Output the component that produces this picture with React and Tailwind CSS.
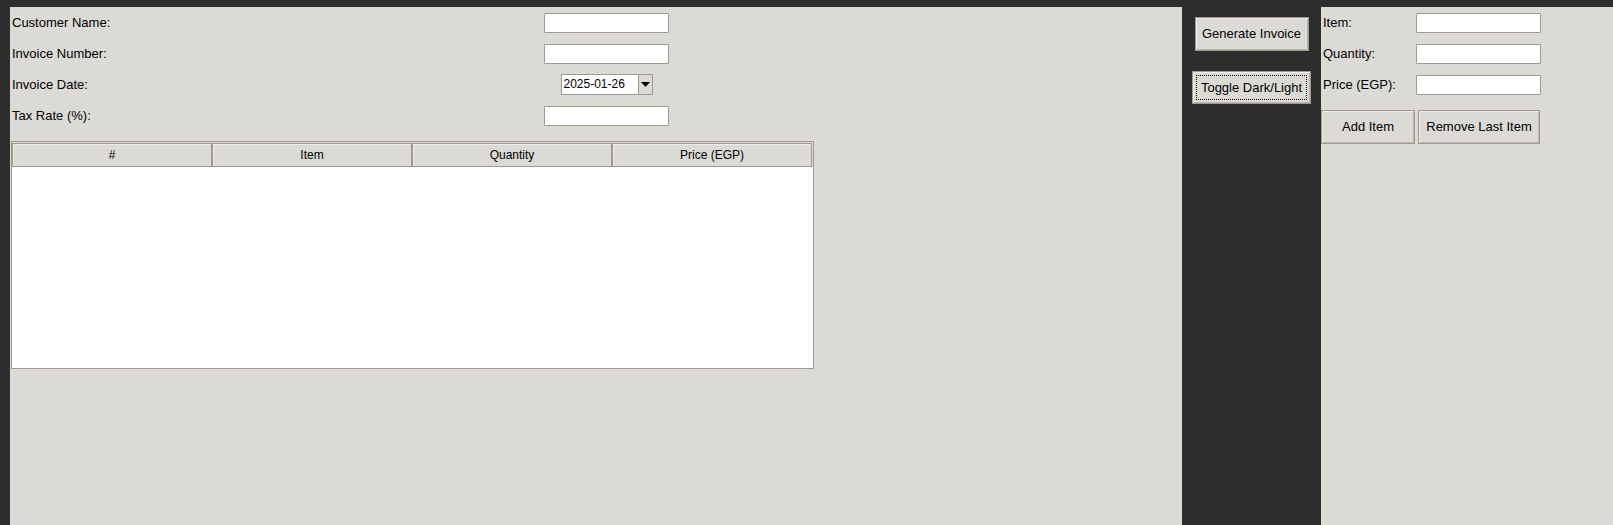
import { useState } from "react";

const font = { fontFamily: '"Liberation Sans", Arial, sans-serif' };

function Entry({ value = "", width = "w-[125px]" }) {
  return (
    <input
      defaultValue={value}
      className={`${width} h-[20px] bg-white border border-[#9e9a91] rounded-[1px] px-1 text-[13px] outline-none`}
    />
  );
}

function TkButton({ children, className = "", focused = false }) {
  return (
    <button
      className={`relative bg-[#dcdad5] border border-[#9e9a91] shadow-[inset_1px_1px_0_#eeebe7,inset_-1px_-1px_0_#bab5ab] text-[13px] text-black flex items-center justify-center ${className}`}
    >
      {focused && (
        <span className="absolute inset-[3px] border border-dotted border-black" />
      )}
      <span className="relative">{children}</span>
    </button>
  );
}

function Row({ label, children, labelWidth }) {
  return (
    <div className="flex items-center h-[31px]">
      <div className={`${labelWidth} pl-[2px] text-[13px] text-black`}>{label}</div>
      {children}
    </div>
  );
}

export default function App() {
  const [date] = useState("2025-01-26");
  const columns = ["#", "Item", "Quantity", "Price (EGP)"];

  return (
    <div className="h-[525px] w-[1613px] bg-[#2d2d2d] pt-[7px] pl-[10px] flex overflow-hidden" style={font}>
      {/* Left panel: invoice info + table */}
      <div className="w-[1172px] h-full bg-[#dcdad5]">
        <Row label="Customer Name:" labelWidth="w-[534px]">
          <Entry />
        </Row>
        <Row label="Invoice Number:" labelWidth="w-[534px]">
          <Entry />
        </Row>
        <Row label="Invoice Date:" labelWidth="w-[534px]">
          <div className="w-[125px] flex justify-center">
            <div className="flex h-[21px] w-[92px] border border-[#9e9a91] bg-white">
              <div className="flex-1 text-[12px] leading-[19px] pl-[2px] text-black">{date}</div>
              <div className="w-[14px] bg-[#dcdad5] border-l border-[#9e9a91] flex items-center justify-center">
                <svg width="9" height="5" viewBox="0 0 9 5">
                  <path d="M0 0 H9 L4.5 5 Z" fill="#000" />
                </svg>
              </div>
            </div>
          </div>
        </Row>
        <Row label="Tax Rate (%):" labelWidth="w-[534px]">
          <Entry />
        </Row>

        {/* Items table */}
        <div className="mt-[10px] ml-[1px] w-[803px] h-[228px] border border-[#9e9a91] bg-white flex flex-col">
          <div className="flex h-[25px] bg-[#dcdad5] pt-[1px]">
            {columns.map((c) => (
              <div
                key={c}
                className="w-[200px] h-[24px] border border-[#9e9a91] shadow-[inset_1px_1px_0_#eeebe7] flex items-center justify-center text-[12px] text-black"
              >
                {c}
              </div>
            ))}
          </div>
          <div className="flex-1 bg-white" />
        </div>
      </div>

      {/* Middle dark column with actions */}
      <div className="w-[139px] flex flex-col items-center pt-[10px] gap-[20px]">
        <TkButton className="w-[114px] h-[34px]">Generate Invoice</TkButton>
        <TkButton className="w-[119px] h-[33px]" focused>
          Toggle Dark/Light
        </TkButton>
      </div>

      {/* Right panel: add item */}
      <div className="flex-1 h-full bg-[#dcdad5]">
        <Row label="Item:" labelWidth="w-[95px]">
          <Entry />
        </Row>
        <Row label="Quantity:" labelWidth="w-[95px]">
          <Entry />
        </Row>
        <Row label="Price (EGP):" labelWidth="w-[95px]">
          <Entry />
        </Row>
        <div className="flex gap-[3px] mt-[10px]">
          <TkButton className="w-[94px] h-[34px]">Add Item</TkButton>
          <TkButton className="w-[122px] h-[34px]">Remove Last Item</TkButton>
        </div>
      </div>
    </div>
  );
}
